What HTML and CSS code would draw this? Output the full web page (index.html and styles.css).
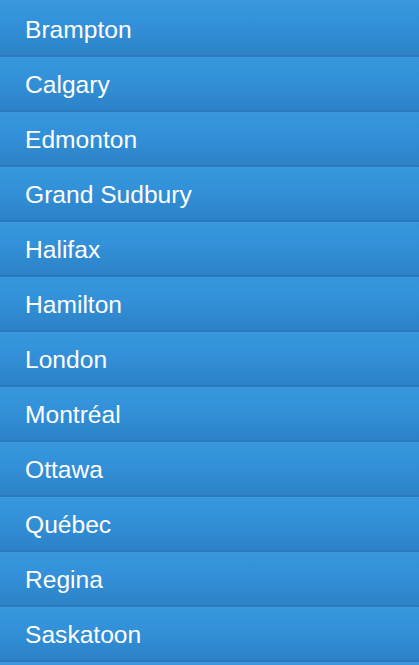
FILE: index.html
```html
<!DOCTYPE html>
<html lang="fr">
<head>
<meta charset="utf-8">
<title>Villes</title>
<link rel="stylesheet" href="styles.css">
</head>
<body>
<ul class="cities">
  <li class="city">Brampton</li>
  <li class="city">Calgary</li>
  <li class="city">Edmonton</li>
  <li class="city">Grand Sudbury</li>
  <li class="city">Halifax</li>
  <li class="city">Hamilton</li>
  <li class="city">London</li>
  <li class="city">Montréal</li>
  <li class="city">Ottawa</li>
  <li class="city">Québec</li>
  <li class="city">Regina</li>
  <li class="city">Saskatoon</li>
</ul>
</body>
</html>
```
FILE: styles.css
```css
html, body {
  margin: 0;
  padding: 0;
  background: #3a97de;
}
body {
  padding-top: 2px;
  font-family: "Liberation Sans", Arial, sans-serif;
}
.cities {
  list-style: none;
  margin: 0;
  padding: 0;
}
.city {
  box-sizing: border-box;
  height: 55px;
  padding: 13px 0 0 25px;
  font-size: 24.6px;
  line-height: 28px;
  color: #ffffff;
  background: linear-gradient(to bottom, #3896dd 0%, #3391d9 40%, #2c82c7 100%);
  border-top: 1px solid #3c99df;
  border-bottom: 2px solid #2a79bd;
}
```
